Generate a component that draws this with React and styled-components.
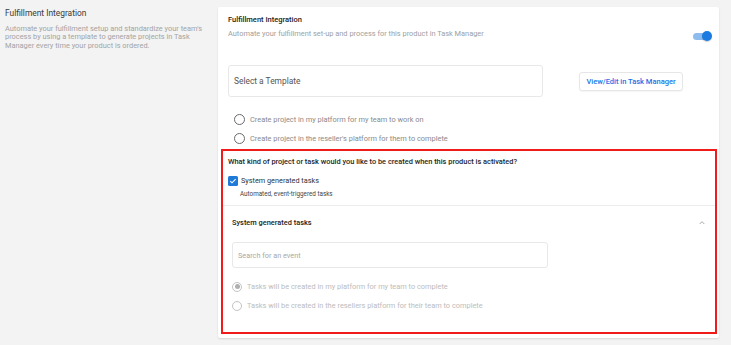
import React, { useState } from 'react';
import styled, { createGlobalStyle } from 'styled-components';

const GlobalStyle = createGlobalStyle`
  html, body {
    margin: 0;
    padding: 0;
    background: #f3f3f3;
    font-family: Roboto, "Liberation Sans", sans-serif;
  }
`;

const Page = styled.div`
  display: flex;
  align-items: flex-start;
  padding: 7px 12px 8px 0;
  width: 731px;
  box-sizing: border-box;
`;

const Intro = styled.div`
  width: 218px;
  flex-shrink: 0;
  padding: 0 13px 0 5px;
  box-sizing: border-box;
`;

const IntroTitle = styled.div`
  font-size: 8.4px;
  line-height: 12px;
  color: #3a3a3a;
`;

const IntroText = styled.p`
  margin: 6px 0 0;
  font-size: 7.4px;
  line-height: 8.4px;
  color: #a3a3a3;
`;

const Card = styled.div`
  flex: 1;
  background: #fff;
  border-radius: 2px;
  box-shadow: 0 1px 2px rgba(0, 0, 0, 0.12);
  padding: 7px 2px 4px 3px;
`;

const Header = styled.div`
  display: flex;
  justify-content: space-between;
  padding: 0 5px 0 7px;
`;

const CardTitle = styled.div`
  font-size: 7.5px;
  font-weight: 500;
  line-height: 12px;
  color: #222;
`;

const CardSub = styled.div`
  margin-top: 2px;
  font-size: 7.4px;
  line-height: 12px;
  color: #a0a0a0;
`;

const Toggle = styled.div`
  margin-top: 17px;
  width: 19px;
  height: 10px;
  position: relative;
  &::before {
    content: '';
    position: absolute;
    left: 0;
    right: 1px;
    top: 2px;
    height: 7px;
    border-radius: 4px;
    background: #8ebcef;
  }
  &::after {
    content: '';
    position: absolute;
    right: 0;
    top: 0;
    width: 10px;
    height: 10px;
    border-radius: 50%;
    background: #1b7be0;
    box-shadow: 0 1px 1px rgba(0, 0, 0, 0.2);
  }
`;

const TemplateRow = styled.div`
  display: flex;
  align-items: center;
  gap: 36px;
  margin: 24px 0 0 7px;
`;

const SelectBox = styled.div`
  width: 315px;
  height: 32px;
  box-sizing: border-box;
  border: 1px solid #e8e8e8;
  border-radius: 3px;
  display: flex;
  align-items: center;
  padding-left: 5px;
  font-size: 8.4px;
  color: #555;
`;

const OutlineButton = styled.button`
  height: 19px;
  width: 104px;
  padding: 0;
  border: 1px solid #e6e6e6;
  border-radius: 3px;
  background: #fff;
  color: #1a73e8;
  font-family: inherit;
  font-size: 7.5px;
  font-weight: 500;
  box-shadow: 0 1px 1px rgba(0, 0, 0, 0.04);
`;

const RadioGroup = styled.div`
  margin: ${(p) => p.$top}px 0 0 ${(p) => p.$left}px;
`;

const RadioRow = styled.label`
  display: flex;
  align-items: center;
  gap: 5px;
  height: 19px;
  font-size: 7.4px;
  color: ${(p) => (p.$disabled ? '#bcbcbc' : '#8a8a8a')};
`;

const RadioCircle = styled.span`
  width: ${(p) => p.$size}px;
  height: ${(p) => p.$size}px;
  box-sizing: border-box;
  border-radius: 50%;
  border: 1.5px solid ${(p) => (p.$disabled ? '#c4c4c4' : '#6a6a6a')};
  display: flex;
  align-items: center;
  justify-content: center;
  &::after {
    content: '';
    display: ${(p) => (p.$checked ? 'block' : 'none')};
    width: 5px;
    height: 5px;
    border-radius: 50%;
    background: #b0b0b0;
  }
`;

const Highlight = styled.div`
  margin-top: 1px;
  border: 2px solid #f21b1b;
`;

const Question = styled.div`
  padding: 5px 5px 6px;
`;

const QuestionText = styled.div`
  font-size: 7.4px;
  font-weight: 500;
  line-height: 12px;
  color: #1e1e1e;
`;

const CheckRow = styled.div`
  display: flex;
  align-items: center;
  gap: 3px;
  margin-top: 7px;
  font-size: 7.3px;
  line-height: 12px;
  color: #333;
`;

const CheckBox = styled.span`
  width: 10px;
  height: 10px;
  border-radius: 1.5px;
  background: #1f7ad8;
  display: flex;
  align-items: center;
  justify-content: center;
`;

const CheckHint = styled.div`
  margin: 2px 0 0 12px;
  font-size: 6.3px;
  line-height: 10px;
  color: #444;
`;

const Section = styled.div`
  border-top: 1px solid #ececec;
  padding: 11px 9px 17px 9px;
`;

const SectionHead = styled.div`
  display: flex;
  align-items: center;
  justify-content: space-between;
  font-size: 7.4px;
  font-weight: 500;
  line-height: 12px;
  color: #222;
  cursor: pointer;
`;

const SearchInput = styled.input`
  display: block;
  margin-top: 13px;
  width: 316px;
  height: 26px;
  box-sizing: border-box;
  border: 1px solid #e8e8e8;
  border-radius: 3px;
  padding: 0 5px;
  font-family: inherit;
  font-size: 7.3px;
  color: #333;
  outline: none;
  &::placeholder {
    color: #a8a8a8;
  }
`;

const Check = () => (
  <svg width="8" height="8" viewBox="0 0 24 24">
    <path d="M4 12.5l5 5L20 6.5" fill="none" stroke="#fff" strokeWidth="3.2" />
  </svg>
);

const Chevron = () => (
  <svg width="8" height="8" viewBox="0 0 24 24">
    <path d="M5 15l7-7 7 7" fill="none" stroke="#888" strokeWidth="2.2" />
  </svg>
);

const App = () => {
  const [search, setSearch] = useState('');

  return (
    <Page>
      <GlobalStyle />
      <Intro>
        <IntroTitle>Fulfillment Integration</IntroTitle>
        <IntroText>
          Automate your fulfillment setup and standardize your team's process by using a
          template to generate projects in Task Manager every time your product is ordered.
        </IntroText>
      </Intro>
      <Card>
        <Header>
          <div>
            <CardTitle>Fulfillment Integration</CardTitle>
            <CardSub>Automate your fulfillment set-up and process for this product in Task Manager</CardSub>
          </div>
          <Toggle />
        </Header>
        <TemplateRow>
          <SelectBox>Select a Template</SelectBox>
          <OutlineButton>View/Edit in Task Manager</OutlineButton>
        </TemplateRow>
        <RadioGroup $top={13} $left={13}>
          <RadioRow>
            <RadioCircle $size={11} />
            Create project in my platform for my team to work on
          </RadioRow>
          <RadioRow>
            <RadioCircle $size={11} />
            Create project in the reseller's platform for them to complete
          </RadioRow>
        </RadioGroup>
        <Highlight>
          <Question>
            <QuestionText>What kind of project or task would you like to be created when this product is activated?</QuestionText>
            <CheckRow>
              <CheckBox>
                <Check />
              </CheckBox>
              System generated tasks
            </CheckRow>
            <CheckHint>Automated, event-triggered tasks</CheckHint>
          </Question>
          <Section>
            <SectionHead>
              System generated tasks
              <Chevron />
            </SectionHead>
            <SearchInput
              value={search}
              onChange={(e) => setSearch(e.target.value)}
              placeholder="Search for an event"
            />
            <RadioGroup $top={9} $left={0}>
              <RadioRow $disabled>
                <RadioCircle $size={10} $disabled $checked />
                Tasks will be created in my platform for my team to complete
              </RadioRow>
              <RadioRow $disabled>
                <RadioCircle $size={10} $disabled />
                Tasks will be created in the resellers platform for their team to complete
              </RadioRow>
            </RadioGroup>
          </Section>
        </Highlight>
      </Card>
    </Page>
  );
};

export default App;
